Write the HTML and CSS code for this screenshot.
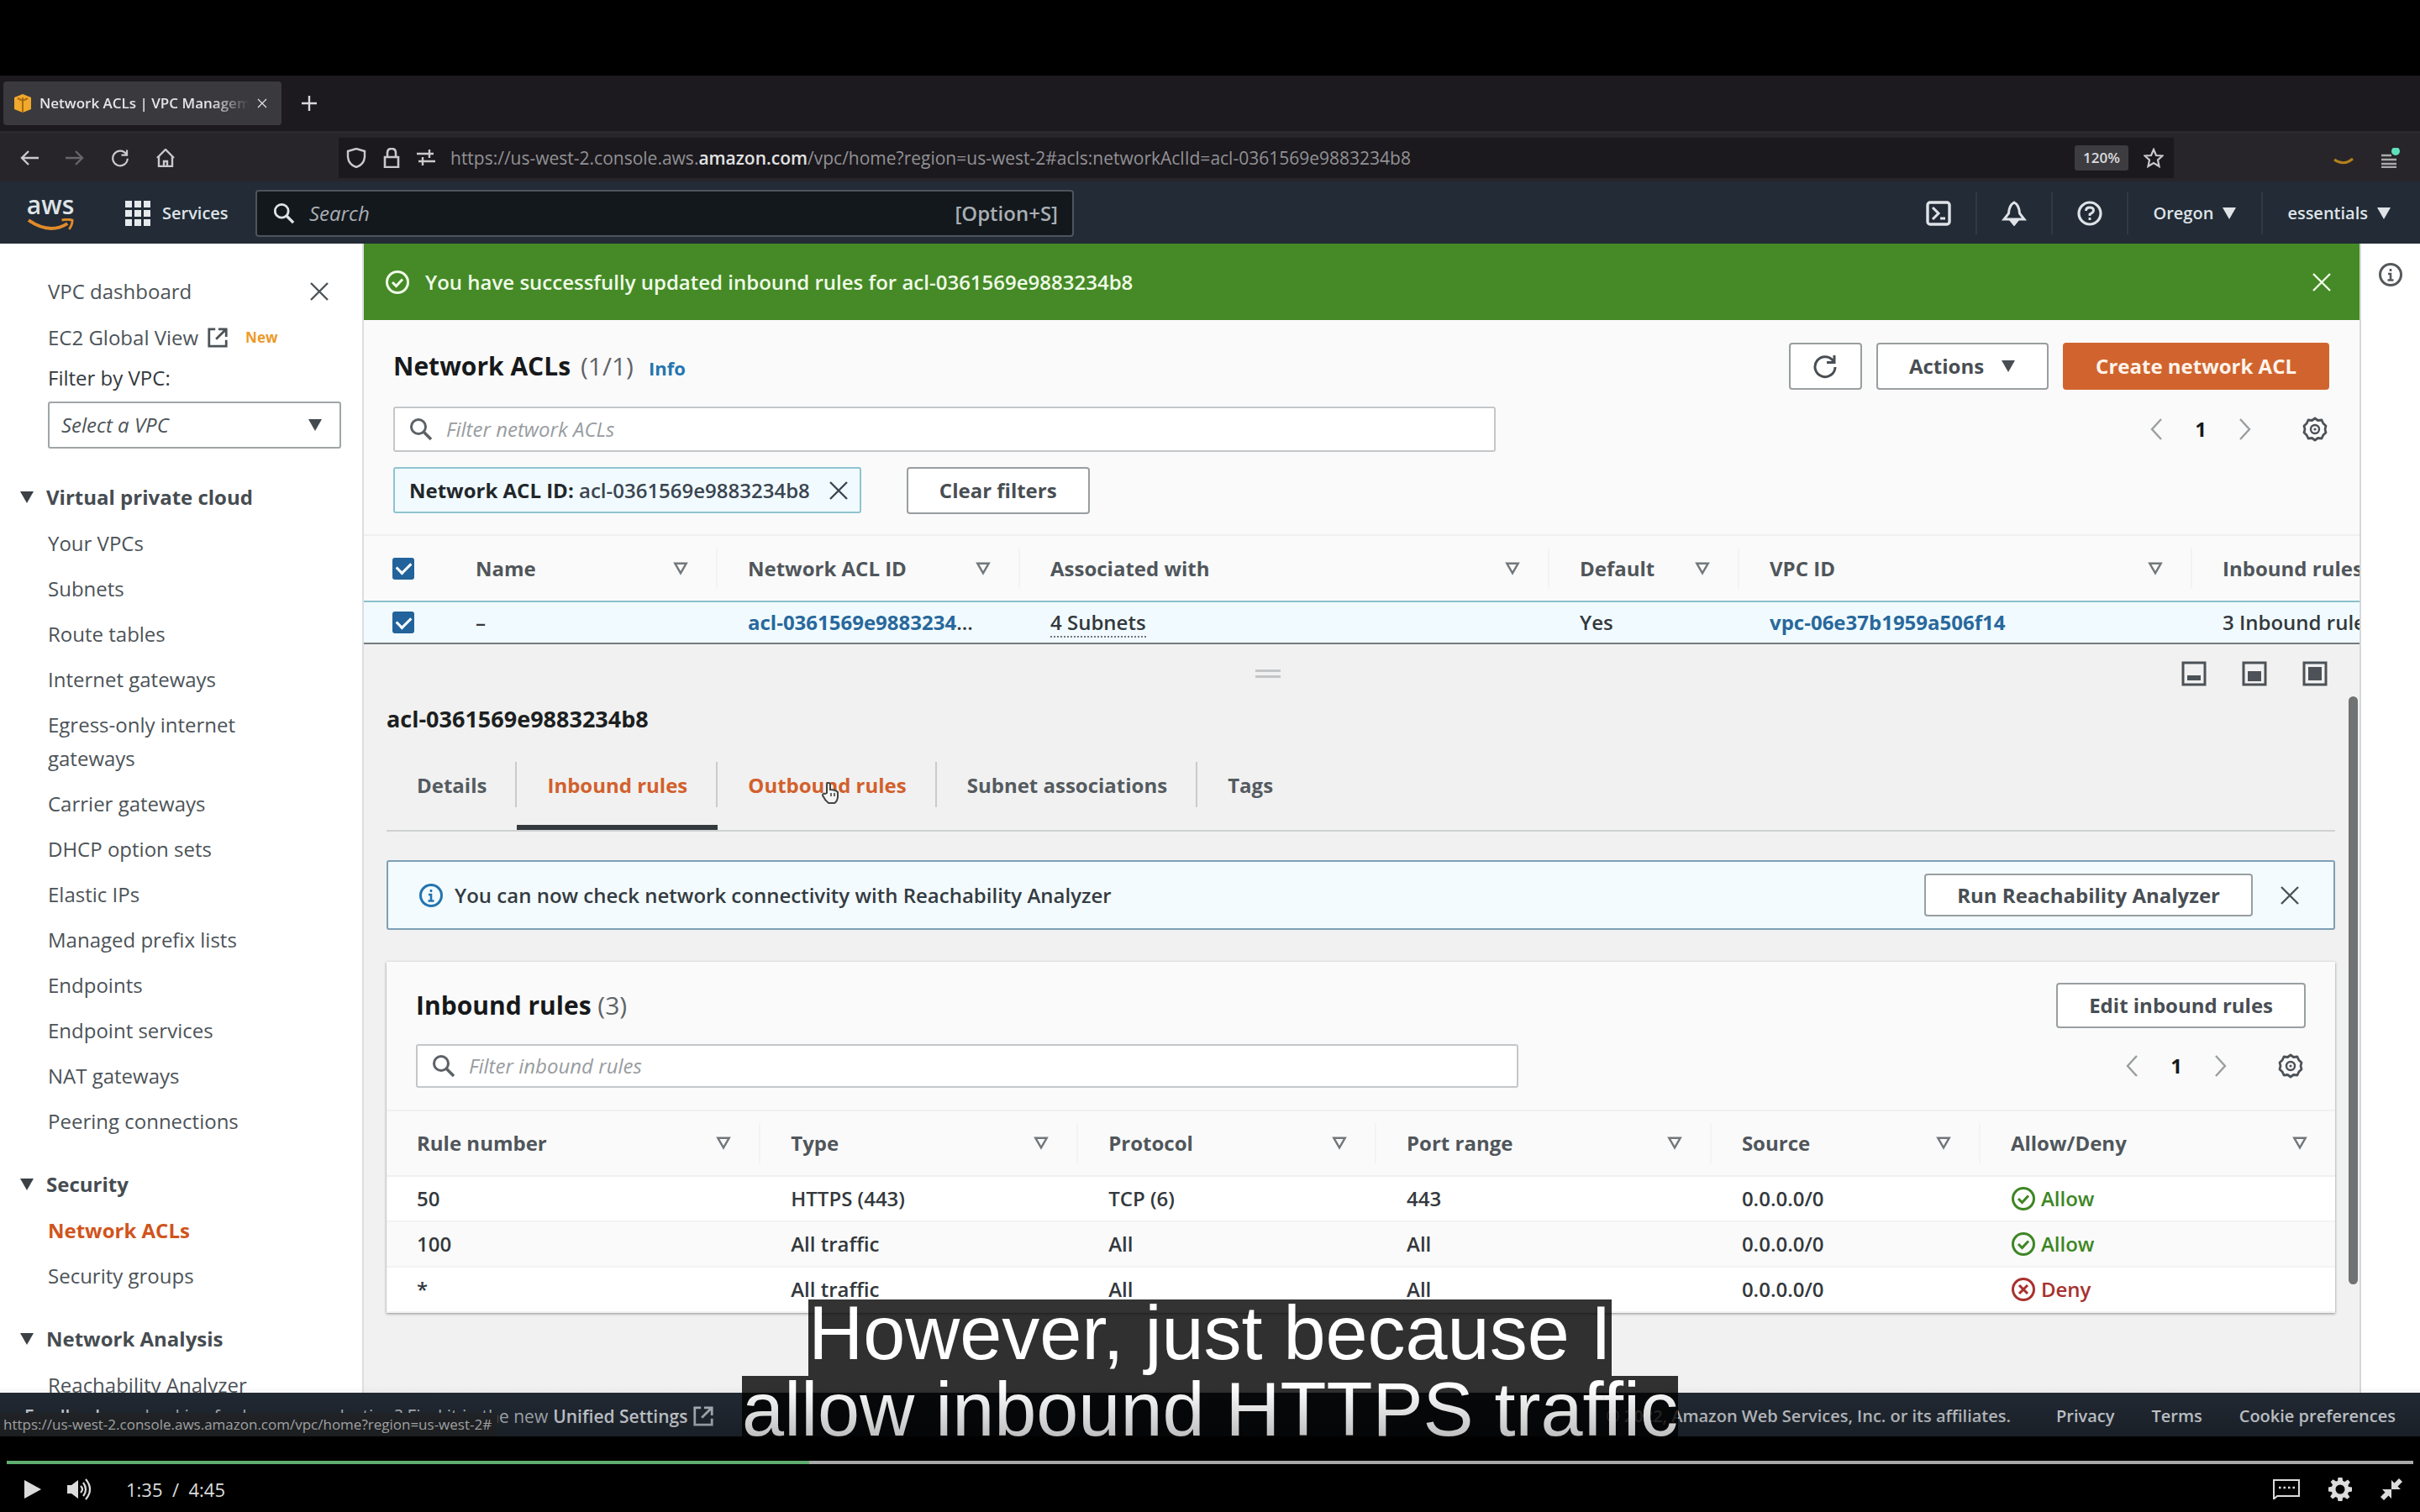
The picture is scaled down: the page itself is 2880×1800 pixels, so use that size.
FILE: index.html
```html
<!DOCTYPE html>
<html lang="en">
<head>
<meta charset="utf-8">
<title>Network ACLs | VPC Management Console</title>
<link rel="stylesheet" href="styles.css">
</head>
<body>
<svg class="defs" aria-hidden="true">
  <symbol id="close" viewBox="0 0 24 24"><path d="M2 2 22 22M22 2 2 22" fill="none" stroke="currentColor" stroke-width="2.4"/></symbol>
  <symbol id="down" viewBox="0 0 20 18"><path d="M1 1H19L10 17Z" fill="currentColor"/></symbol>
  <symbol id="sort" viewBox="0 0 20 18"><path d="M2.500 2H17.500L10 15Z" fill="none" stroke="currentColor" stroke-width="2.800"/></symbol>
  <symbol id="search" viewBox="0 0 28 28"><circle cx="11" cy="11" r="8.500" fill="none" stroke="currentColor" stroke-width="3"/><path d="M17 17 26 26" stroke="currentColor" stroke-width="3.600"/></symbol>
  <symbol id="external" viewBox="0 0 28 28"><path d="M11 3H3V25H25V17M15 3H25V13M25 3 12 16" fill="none" stroke="currentColor" stroke-width="3"/></symbol>
  <symbol id="ok" viewBox="0 0 30 30"><circle cx="15" cy="15" r="12.500" fill="none" stroke="currentColor" stroke-width="3"/><path d="M9 15 13.500 19.500 21 11.500" fill="none" stroke="currentColor" stroke-width="3"/></symbol>
  <symbol id="no" viewBox="0 0 30 30"><circle cx="15" cy="15" r="12.500" fill="none" stroke="currentColor" stroke-width="3"/><path d="M10 10 20 20M20 10 10 20" stroke="currentColor" stroke-width="3"/></symbol>
  <symbol id="info" viewBox="0 0 30 30"><circle cx="15" cy="15" r="12.500" fill="none" stroke="currentColor" stroke-width="3"/><path d="M15 8V11M12 14H15V21M11.500 21.500H18.500" fill="none" stroke="currentColor" stroke-width="2.600"/></symbol>
  <symbol id="gear" viewBox="0 0 30 30"><path d="M15 2 18.500 4.500 23 4 24.800 8 28 11 27 15 28 19 24.800 22 23 26 18.500 25.500 15 28 11.500 25.500 7 26 5.200 22 2 19 3 15 2 11 5.200 8 7 4 11.500 4.500Z" fill="none" stroke="currentColor" stroke-width="2.800" stroke-linejoin="round"/><circle cx="15" cy="15" r="5" fill="none" stroke="currentColor" stroke-width="2.400"/><circle cx="15" cy="15" r="1.600" fill="currentColor"/></symbol>
  <symbol id="prev" viewBox="0 0 16 28"><path d="M14 2 3 14 14 26" fill="none" stroke="currentColor" stroke-width="2.400"/></symbol>
  <symbol id="next" viewBox="0 0 16 28"><path d="M2 2 13 14 2 26" fill="none" stroke="currentColor" stroke-width="2.400"/></symbol>
  <symbol id="reload" viewBox="0 0 30 30"><path d="M25 9A12 12 0 1 0 27 16M26 2V10.500H17" fill="none" stroke="currentColor" stroke-width="3"/></symbol>
</svg>

<main class="video">
  <div class="tabbar">
    <div class="tab">
      <svg class="i22" viewBox="0 0 22 22"><path d="M11 0 21 4V18L11 22 1 18V4Z" fill="#f0a92c"/><path d="M11 4V22M5 5 11 8 17 5" stroke="#a86a10" stroke-width="2" fill="none"/></svg>
      <span class="tab-title">Network ACLs | VPC Management</span>
      <svg class="i12"><use href="#close"/></svg>
    </div>
    <svg class="i18" viewBox="0 0 18 18"><path d="M9 0V18M0 9H18" stroke="#d8d8da" stroke-width="2.400"/></svg>
  </div>

  <div class="toolbar">
    <div class="navs">
      <svg class="i22" viewBox="0 0 22 22"><path d="M22 11H2M10 3 2 11 10 19" fill="none" stroke="currentColor" stroke-width="2.400"/></svg>
      <svg class="i22 dim" viewBox="0 0 22 22"><path d="M0 11H20M12 3 20 11 12 19" fill="none" stroke="currentColor" stroke-width="2.400"/></svg>
      <svg class="i22"><use href="#reload"/></svg>
      <svg class="i22" viewBox="0 0 22 22"><path d="M1 11 11 1 21 11M3 9V21H19V9M9 21V15H13V21" fill="none" stroke="currentColor" stroke-width="2.400"/></svg>
    </div>
    <div class="url">
      <svg class="i24" viewBox="0 0 24 24"><path d="M12 1 22 4V11Q21 20 12 23Q3 20 2 11V4Z" fill="none" stroke="currentColor" stroke-width="2.400"/></svg>
      <svg class="i24" viewBox="0 0 24 24"><path d="M4 11H20V23H4ZM7 11V6Q7 1 12 1Q17 1 17 6V11" fill="none" stroke="currentColor" stroke-width="2.600"/></svg>
      <svg class="i22" viewBox="0 0 22 22"><path d="M0 6H20M15 1V11M2 15H22M7 10V20" stroke="currentColor" stroke-width="2.400"/></svg>
      <span class="address">https://us-west-2.console.aws.<b>amazon.com</b>/vpc/home?region=us-west-2#acls:networkAclId=acl-0361569e9883234b8</span>
      <span class="zoom">120%</span>
      <svg class="i24" viewBox="0 0 24 24"><path d="M12 2 15 9 22.500 9.500 17 14.500 18.500 22 12 18 5.500 22 7 14.500 1.500 9.500 9 9Z" fill="none" stroke="currentColor" stroke-width="2.200"/></svg>
    </div>
    <div class="ext">
      <svg class="i24" viewBox="0 0 24 24"><path d="M1 14Q12 22 23 13" fill="none" stroke="#b5801c" stroke-width="3"/></svg>
      <svg class="i24" viewBox="0 0 24 24"><path d="M2 9H14M2 14H20M2 19H20M2 23H20" stroke="#aaa" stroke-width="2.600"/><circle cx="19" cy="4" r="5" fill="#5fe0bd"/></svg>
    </div>
  </div>

  <header class="aws">
    <a class="logo" href="#" aria-label="aws home"><span>aws</span><svg viewBox="0 0 58 16"><path d="M2 2Q28 20 50 6" fill="none" stroke="#e08a2a" stroke-width="4"/><path d="M43 2Q50 0 56 2Q56 8 52 13" fill="none" stroke="#e08a2a" stroke-width="3"/></svg></a>
    <button class="services" type="button"><svg class="i30" viewBox="0 0 30 30" fill="#e6e9ec"><path d="M0 0H8V8H0ZM11 0H19V8H11ZM22 0H30V8H22ZM0 11H8V19H0ZM11 11H19V19H11ZM22 11H30V19H22ZM0 22H8V30H0ZM11 22H19V30H11ZM22 22H30V30H22Z"/></svg>Services</button>
    <label class="aws-search"><svg class="i26"><use href="#search"/></svg><input type="text" placeholder="Search" aria-label="Search"><span>[Option+S]</span></label>
    <div class="aws-right">
      <button type="button" aria-label="CloudShell"><svg class="i30" viewBox="0 0 30 30"><rect x="2" y="2" width="26" height="26" rx="3" fill="none" stroke="currentColor" stroke-width="3.400"/><path d="M8 8 15 15 8 22M17 21H23" fill="none" stroke="currentColor" stroke-width="3"/></svg></button>
      <button type="button" aria-label="Notifications"><svg class="i30" viewBox="0 0 30 30"><path d="M15 2Q9 5 8.500 15L3 22H27L21.500 15Q21 5 15 2Z" fill="none" stroke="currentColor" stroke-width="3"/><path d="M11 24H19L15 29Z" fill="currentColor" stroke="currentColor" stroke-width="2"/></svg></button>
      <button type="button" aria-label="Help"><svg class="i30" viewBox="0 0 30 30"><circle cx="15" cy="15" r="13" fill="none" stroke="currentColor" stroke-width="3.200"/><path d="M10.500 12Q10.500 8 15 8Q19.500 8 19.500 11.500Q19.500 14 15 16V18M15 20V23" fill="none" stroke="currentColor" stroke-width="2.800"/></svg></button>
      <button type="button">Oregon<svg class="tri"><use href="#down"/></svg></button>
      <button type="button">essentials<svg class="tri"><use href="#down"/></svg></button>
    </div>
  </header>

  <div class="console">
    <nav class="side">
      <div class="side-top"><a href="#">VPC dashboard</a><button type="button" aria-label="Close navigation"><svg class="i24"><use href="#close"/></svg></button></div>
      <a class="global" href="#">EC2 Global View <svg class="i26"><use href="#external"/></svg><small>New</small></a>
      <label class="by-vpc" for="vpc">Filter by VPC:</label>
      <div class="select"><select id="vpc"><option>Select a VPC</option></select><svg class="tri"><use href="#down"/></svg></div>
      <h3><svg class="tri"><use href="#down"/></svg>Virtual private cloud</h3>
      <ul>
        <li><a href="#">Your VPCs</a></li><li><a href="#">Subnets</a></li><li><a href="#">Route tables</a></li><li><a href="#">Internet gateways</a></li><li><a href="#">Egress-only internet<br>gateways</a></li><li><a href="#">Carrier gateways</a></li><li><a href="#">DHCP option sets</a></li><li><a href="#">Elastic IPs</a></li><li><a href="#">Managed prefix lists</a></li><li><a href="#">Endpoints</a></li><li><a href="#">Endpoint services</a></li><li><a href="#">NAT gateways</a></li><li><a href="#">Peering connections</a></li>
      </ul>
      <h3><svg class="tri"><use href="#down"/></svg>Security</h3>
      <ul><li><a class="current" href="#">Network ACLs</a></li><li><a href="#">Security groups</a></li></ul>
      <h3><svg class="tri"><use href="#down"/></svg>Network Analysis</h3>
      <ul><li><a href="#">Reachability Analyzer</a></li></ul>
    </nav>

    <section class="content">
      <div class="flash"><svg class="i30"><use href="#ok"/></svg><span>You have successfully updated inbound rules for acl-0361569e9883234b8</span><button type="button" aria-label="Dismiss"><svg class="i24"><use href="#close"/></svg></button></div>

      <div class="list">
        <div class="list-head">
          <h1>Network ACLs <span>(1/1)</span></h1><a class="info" href="#">Info</a>
          <div class="actions">
            <button class="btn icon" type="button" aria-label="Refresh"><svg class="i30"><use href="#reload"/></svg></button>
            <button class="btn" type="button">Actions<svg class="tri"><use href="#down"/></svg></button>
            <button class="btn primary" type="button">Create network ACL</button>
          </div>
        </div>
        <div class="filter-row">
          <label class="filter"><svg class="i28"><use href="#search"/></svg><input type="text" placeholder="Filter network ACLs" aria-label="Filter network ACLs"></label>
          <div class="pager"><button type="button" aria-label="Previous"><svg><use href="#prev"/></svg></button><b>1</b><button type="button" aria-label="Next"><svg><use href="#next"/></svg></button><button class="prefs" type="button" aria-label="Preferences"><svg class="i30"><use href="#gear"/></svg></button></div>
        </div>
        <div class="tokens">
          <div class="token"><span><b>Network ACL ID:</b> acl-0361569e9883234b8</span><button type="button" aria-label="Remove filter"><svg class="i24"><use href="#close"/></svg></button></div>
          <button class="btn" type="button">Clear filters</button>
        </div>
        <table class="acls">
          <colgroup><col class="c-check"><col class="c-name"><col class="c-id"><col class="c-assoc"><col class="c-def"><col class="c-vpc"><col class="c-in"></colgroup>
          <thead><tr><th><input type="checkbox" checked aria-label="Select all"></th><th><div>Name<svg class="sort"><use href="#sort"/></svg></div></th><th><div>Network ACL ID<svg class="sort"><use href="#sort"/></svg></div></th><th><div>Associated with<svg class="sort"><use href="#sort"/></svg></div></th><th><div>Default<svg class="sort"><use href="#sort"/></svg></div></th><th><div>VPC ID<svg class="sort"><use href="#sort"/></svg></div></th><th><div>Inbound rules</div></th></tr></thead>
          <tbody><tr><td><input type="checkbox" checked aria-label="Select acl-0361569e9883234b8"></td><td>–</td><td><a href="#">acl-0361569e9883234</a>...</td><td><span class="dotted">4 Subnets</span></td><td>Yes</td><td><a href="#">vpc-06e37b1959a506f14</a></td><td>3 Inbound rules</td></tr></tbody>
        </table>
      </div>

      <div class="split">
        <div class="split-bar">
          <div class="grip-area"><span class="grip"></span></div>
          <div class="sizes">
            <svg class="i30" viewBox="0 0 30 30"><rect x="2" y="2" width="26" height="26" fill="none" stroke="currentColor" stroke-width="3"/><path d="M7 17H23V23H7Z" fill="currentColor"/></svg>
            <svg class="i30" viewBox="0 0 30 30"><rect x="2" y="2" width="26" height="26" fill="none" stroke="currentColor" stroke-width="3"/><path d="M7 12H23V24H7Z" fill="currentColor"/></svg>
            <svg class="i30" viewBox="0 0 30 30"><rect x="2" y="2" width="26" height="26" fill="none" stroke="currentColor" stroke-width="3"/><path d="M7 7H23V23H7Z" fill="currentColor"/></svg>
          </div>
        </div>
        <div class="split-body">
          <h2>acl-0361569e9883234b8</h2>
          <div class="tabs">
            <button type="button">Details</button><button class="active" type="button">Inbound rules</button><button class="hover" type="button">Outbound rules<svg class="hand" viewBox="0 0 24 26"><path d="M8 13V3Q8 1 10 1Q12 1 12 3V9Q18 9 21 12V18Q20 24 17 25H10Q6 22 3 16Q3 13 6 14Z" fill="#f4f4f4" stroke="#444" stroke-width="2"/><path d="M13 13V17M17 13V17" stroke="#666" stroke-width="2"/></svg></button><button type="button">Subnet associations</button><button type="button">Tags</button>
          </div>
          <div class="notice"><svg class="i30"><use href="#info"/></svg><span>You can now check network connectivity with Reachability Analyzer</span><button class="btn" type="button">Run Reachability Analyzer</button><button class="x" type="button" aria-label="Dismiss"><svg class="i24"><use href="#close"/></svg></button></div>
          <div class="card">
            <div class="card-head"><h2>Inbound rules <span>(3)</span></h2><button class="btn" type="button">Edit inbound rules</button></div>
            <div class="filter-row">
              <label class="filter"><svg class="i28"><use href="#search"/></svg><input type="text" placeholder="Filter inbound rules" aria-label="Filter inbound rules"></label>
              <div class="pager"><button type="button" aria-label="Previous"><svg><use href="#prev"/></svg></button><b>1</b><button type="button" aria-label="Next"><svg><use href="#next"/></svg></button><button class="prefs" type="button" aria-label="Preferences"><svg class="i30"><use href="#gear"/></svg></button></div>
            </div>
            <table class="rules">
              <colgroup><col class="r-num"><col class="r-type"><col class="r-proto"><col class="r-port"><col class="r-src"><col class="r-act"></colgroup>
              <thead><tr><th><div>Rule number<svg class="sort"><use href="#sort"/></svg></div></th><th><div>Type<svg class="sort"><use href="#sort"/></svg></div></th><th><div>Protocol<svg class="sort"><use href="#sort"/></svg></div></th><th><div>Port range<svg class="sort"><use href="#sort"/></svg></div></th><th><div>Source<svg class="sort"><use href="#sort"/></svg></div></th><th><div>Allow/Deny<svg class="sort"><use href="#sort"/></svg></div></th></tr></thead>
              <tbody>
                <tr><td>50</td><td>HTTPS (443)</td><td>TCP (6)</td><td>443</td><td>0.0.0.0/0</td><td><span class="allow"><svg class="i30"><use href="#ok"/></svg>Allow</span></td></tr>
                <tr><td>100</td><td>All traffic</td><td>All</td><td>All</td><td>0.0.0.0/0</td><td><span class="allow"><svg class="i30"><use href="#ok"/></svg>Allow</span></td></tr>
                <tr><td>*</td><td>All traffic</td><td>All</td><td>All</td><td>0.0.0.0/0</td><td><span class="deny"><svg class="i30"><use href="#no"/></svg>Deny</span></td></tr>
              </tbody>
            </table>
          </div>
          <div class="thumb"></div>
        </div>
      </div>
    </section>

    <aside class="help"><svg class="i30"><use href="#info"/></svg></aside>
  </div>

  <footer class="foot">
    <div class="lang"><b>Feedback</b><span>Looking for language selection? Find it in the new</span><a href="#">Unified Settings</a><svg class="i26"><use href="#external"/></svg></div>
    <div class="legal"><span>© 2022, Amazon Web Services, Inc. or its affiliates.</span><a href="#">Privacy</a><a href="#">Terms</a><a href="#">Cookie preferences</a></div>
    <div class="status">https://us-west-2.console.aws.amazon.com/vpc/home?region=us-west-2#</div>
  </footer>

  <div class="captions"><p>However, just because I</p><p>allow inbound HTTPS traffic</p></div>
  <div class="shade"></div>
</main>

<div class="player">
  <progress value="95" max="285" aria-label="Playback position"></progress>
  <div class="controls">
    <button type="button" aria-label="Play"><svg class="play" viewBox="0 0 20 22"><path d="M0 0 20 11 0 22Z" fill="currentColor"/></svg></button>
    <button class="volume" type="button" aria-label="Volume"><svg class="i30" viewBox="0 0 30 26"><path d="M0 8H5L13 2V24L5 18H0Z" fill="currentColor"/><path d="M16 9Q20 13 16 17M19 5Q25 13 19 21M22 1Q32 13 22 25" fill="none" stroke="currentColor" stroke-width="2.200"/></svg></button>
    <span class="time">1:35&nbsp; /&nbsp; 4:45</span>
    <div class="end">
      <button type="button" aria-label="Captions"><svg class="i32" viewBox="0 0 32 24"><path d="M1 1H31V20H5L1 23.500Z" fill="none" stroke="currentColor" stroke-width="2"/><path d="M7 10H9.500M12.500 10H15M18 10H20.500M23.500 10H26" stroke="currentColor" stroke-width="2.600"/></svg></button>
      <button type="button" aria-label="Settings"><svg class="i28" viewBox="0 0 28 28"><path fill="currentColor" fill-rule="evenodd" d="M11.500 0H16.500L17.200 4 19.500 5 23 2.600 25.800 5.600 23.400 9 24 11 28 11.500V16.500L24 17.200 23 19.500 25.400 23 22.400 25.800 19 23.400 17 24 16.500 28H11.500L10.800 24 8.500 23 5 25.400 2.200 22.400 4.600 19 4 17 0 16.500V11.500L4 10.800 5 8.500 2.600 5 5.600 2.200 9 4.600 11 4ZM14 8.500A5.500 5.500 0 1 0 14 19.500A5.500 5.500 0 1 0 14 8.500Z"/></svg></button>
      <button type="button" aria-label="Exit full screen"><svg class="i26" viewBox="0 0 26 26"><path d="M13 13V2L16.500 5.500 22 0 26 4 20.500 9.500 24 13ZM13 13V24L9.500 20.500 4 26 0 22 5.500 16.500 2 13Z" fill="currentColor"/></svg></button>
    </div>
  </div>
</div>
</body>
</html>
```

FILE: styles.css
```css
* { box-sizing: border-box; }
body { margin: 0; height: 100vh; display: flex; flex-direction: column; padding-top: 90px; background: #000; overflow: hidden; font: 500 24px/40px "Open Sans", "Noto Sans", sans-serif; color: #33383c; }
a { color: inherit; text-decoration: none; }
button { font: inherit; color: inherit; background: none; border: 0; padding: 0; display: flex; align-items: center; }
input, select { font: inherit; color: inherit; background: none; border: 0; padding: 0; min-width: 0; outline: 0; }
h1, h2, h3, p, ul { margin: 0; padding: 0; list-style: none; }
svg { flex: none; display: block; }
.defs { position: absolute; width: 0; height: 0; }
.i12 { width: 12px; height: 12px; }
.i18 { width: 18px; height: 18px; }
.i22 { width: 22px; height: 22px; }
.i24 { width: 24px; height: 24px; }
.i26 { width: 26px; height: 26px; }
.i28 { width: 28px; height: 28px; }
.i30 { width: 30px; height: 30px; }
.i32 { width: 32px; height: 24px; }
.tri { width: 18px; height: 16px; }
.sort { width: 18px; height: 16px; color: #72777b; }

.video { position: relative; flex: 1; min-height: 0; display: flex; flex-direction: column; overflow: hidden; background: #1c1a1f; }

/* browser chrome */
.tabbar { display: flex; align-items: center; gap: 24px; height: 66px; padding: 0 4px; }
.tab { display: flex; align-items: center; width: 331px; height: 52px; padding: 0 17px 0 12px; gap: 9px; background: #3a393d; border-radius: 4px; color: #e4e4e6; font-size: 17px; font-weight: 600; }
.tab-title { flex: 1; overflow: hidden; white-space: nowrap; mask-image: linear-gradient(90deg, #000 82%, transparent); }
.toolbar { display: flex; align-items: center; height: 60px; padding: 0 24px; background: #27252a; border-top: 3px solid #2b292e; color: #c9c9cc; }
.navs { display: flex; gap: 32px; width: 379px; }
.dim { color: #66656a; }
.url { flex: 1; display: flex; align-items: center; gap: 18px; height: 48px; padding: 0 12px 0 9px; background: #1b191d; margin-right: 190px; }
.address { flex: 1; overflow: hidden; white-space: nowrap; font-size: 21px; font-weight: 400; color: #929196; }
.address b { color: #e2e2e4; font-weight: 600; }
.zoom { width: 64px; line-height: 30px; text-align: center; font-size: 17px; font-weight: 600; background: #3d3c41; color: #dcdcde; border-radius: 3px; }
.ext { display: flex; gap: 31px; }

/* console header */
.aws { display: flex; align-items: center; height: 74px; padding: 2px 34px 0 32px; background: #222b36; color: #dfe3e7; font-size: 20px; font-weight: 600; }
.logo { width: 56px; display: flex; flex-direction: column; align-items: center; font-size: 30px; line-height: 24px; font-weight: 600; }
.logo svg { width: 56px; height: 16px; margin-top: 4px; }
.services { gap: 14px; margin-left: 61px; width: 155px; }
.aws-search { width: 974px; height: 56px; display: flex; align-items: center; gap: 17px; padding: 0 17px 0 19px; background: #13181d; border: 2px solid #4d545b; border-radius: 4px; font-size: 24px; }
.aws-search input { flex: 1; font-style: italic; font-weight: 500; }
.aws-search span { color: #a9aeb3; font-weight: 600; }
.aws-search input::placeholder { color: #a9aeb3; opacity: 1; }
.aws-right { margin-left: auto; display: flex; }
.aws-right button { height: 50px; padding: 0 29px; gap: 10px; border-left: 2px solid #303a45; }
.aws-right button:first-child { border-left: 0; }
.aws-right button:last-child { padding-right: 0; }

.console { flex: 1; min-height: 0; display: flex; background: #fff; }

/* sidebar */
.side { width: 433px; flex: none; overflow: hidden; padding: 37px 25px 0 57px; border-right: 2px solid #dcdedf; color: #4c5358; }
.side-top { display: flex; justify-content: space-between; padding-right: 14px; }
.side a { display: flex; align-items: center; }
.global { gap: 10px; margin-top: 15px; }
.global small { margin-left: 10px; font-size: 17px; font-weight: 700; color: #ec9a2c; }
.by-vpc { display: block; margin-top: 8px; color: #33383c; }
.select { display: grid; align-items: center; height: 56px; margin: 8px 0 38px; border: 2px solid #a0a5a8; border-radius: 3px; }
.select select { grid-area: 1 / 1; width: 100%; appearance: none; padding-left: 14px; font-style: italic; }
.select svg { grid-area: 1 / 1; justify-self: end; margin-right: 20px; color: #444b50; pointer-events: none; }
.side h3 { display: flex; align-items: center; gap: 14px; margin: 0 0 15px -34px; font-size: 24px; font-weight: 700; color: #464c51; }
.side ul { margin-bottom: 21px; }
.side h3 svg { color: #3c4146; }
.side li { padding-bottom: 14px; }
.side .current { color: #d0541c; font-weight: 700; }

/* content */
.content { flex: 1; min-width: 0; display: flex; flex-direction: column; overflow: hidden; background: #fafafa; }
.flash { display: flex; align-items: center; gap: 18px; height: 91px; padding: 0 33px 0 25px; background: #458a26; color: #f0fbe9; }
.flash span { flex: 1; font-weight: 600; }
.list { overflow: hidden; }
.list-head { display: flex; align-items: center; height: 56px; margin: 27px 36px 0 35px; }
h1, .card h2 { font-size: 30px; font-weight: 700; color: #17191b; }
h1 span, .card h2 span { font-weight: 500; color: #5f6468; }
h1 span { margin-left: 4px; }
.info { margin: 4px 0 0 18px; font-size: 22px; font-weight: 700; color: #2575b0; }
.actions { display: flex; gap: 17px; margin-left: auto; }
.btn { justify-content: center; height: 56px; padding: 0 37px; gap: 20px; background: #fff; border: 2px solid #999ea1; border-radius: 4px; font-weight: 700; color: #484e53; white-space: nowrap; }
.btn.icon { width: 87px; padding: 0; }
.btn.primary { background: #d1642e; border-color: #d1642e; color: #fff4ec; }
.filter-row { display: flex; align-items: center; margin: 20px 38px 0 35px; }
.filter { display: flex; align-items: center; gap: 16px; width: 1312px; height: 54px; padding: 0 17px; border: 2px solid #c4c7c9; border-radius: 3px; background: #fff; color: #5c6165; }
.filter input { flex: 1; font-style: italic; }
.filter input::placeholder { color: #989c9f; opacity: 1; }
.pager { display: flex; align-items: center; margin-left: auto; gap: 38px; color: #17191b; }
.pager button { color: #9a9ea1; }
.pager button svg { width: 16px; height: 28px; }
.pager .prefs { padding-left: 22px; color: #4c5257; }
.pager .prefs svg { width: 30px; height: 30px; }
.tokens { display: flex; gap: 54px; margin: 18px 35px 24px; }
.token { display: flex; align-items: center; gap: 22px; height: 55px; padding: 0 13px 0 17px; border: 2px solid #8fc3d0; border-radius: 3px; background: #f1fbff; color: #3b4550; font-weight: 600; white-space: nowrap; }
.token b { color: #22272b; font-weight: 700; }

table { border-collapse: separate; border-spacing: 0; table-layout: fixed; width: 100%; }
th, td { padding: 0 0 0 36px; text-align: left; white-space: nowrap; overflow: hidden; }
td { font-weight: 600; }
th { height: 79px; font-weight: 700; color: #50565b; border-top: 2px solid #f0f0f1; }
th div { display: flex; align-items: center; justify-content: space-between; height: 48px; padding-right: 33px; border-right: 2px solid #f2f3f3; }
th:last-child div { border-right: 0; }
.acls { width: 2600px; }
.c-check { width: 97px; } .c-name { width: 324px; } .c-id { width: 360px; } .c-assoc { width: 630px; } .c-def { width: 226px; } .c-vpc { width: 539px; } .c-in { width: 424px; }
.acls td { height: 52px; background: #f1fbff; border-top: 2px solid #8cc0cc; border-bottom: 2px solid #747c80; }
.acls th:first-child, .acls td:first-child { padding-left: 34px; }
.acls td a { color: #28689c; font-weight: 700; }
.dotted { border-bottom: 2px dotted #70777b; }
input[type=checkbox] { display: grid; place-items: center; appearance: none; margin: 0; width: 26px; height: 26px; background: #22639b; border-radius: 3px; }
input[type=checkbox]::after { content: ""; width: 8px; height: 14px; margin-top: -4px; border: solid #fff; border-width: 0 3px 3px 0; transform: rotate(45deg); }

/* split panel */
.split { flex: 1; min-height: 0; display: flex; flex-direction: column; background: #f1f1f1; }
.split-bar { display: flex; align-items: center; gap: 50px; height: 62px; padding: 8px 38px 0; }
.grip-area { flex: 1; display: flex; justify-content: center; }
.grip { width: 30px; height: 10px; border: solid #c3c5c6; border-width: 3px 0; }
.sizes { display: flex; gap: 42px; color: #4c5257; }
.split-body { position: relative; flex: 1; padding: 7px 29px 0 27px; }
.split-body > h2 { font-size: 27px; font-weight: 700; color: #1c1f21; }
.tabs { display: flex; margin-top: 31px; border-bottom: 2px solid #cfd1d2; }
.tabs button { position: relative; height: 81px; padding: 0 36px 25px; font-weight: 700; color: #545b60; background: linear-gradient(#c9cbcc, #c9cbcc) right 0 top 0 / 2px 54px no-repeat; }
.tabs button:last-child { background: none; }
.tabs .active, .tabs .hover { color: #d2602c; }
.tabs .active { box-shadow: inset 0 -6px #343a3e; }
.hand { position: absolute; left: 122px; top: 24px; width: 24px; height: 26px; }
.notice { display: flex; align-items: center; height: 83px; margin-top: 34px; padding: 0 40px 0 36px; border: 2px solid #7f9fb5; border-radius: 3px; background: #f3fbff; }
.notice > svg { color: #2474ae; }
.notice span { flex: 1; margin-left: 13px; color: #343b41; font-weight: 600; }
.notice .btn { height: 51px; }
.notice .x { margin-left: 32px; color: #4c5257; }
.card { margin-top: 38px; background: #fafafa; box-shadow: 0 1px 3px #8a8d8f; }
.card-head { display: flex; align-items: center; justify-content: space-between; padding: 25px 35px 0; }
.card-head .btn { height: 54px; }
.card .filter { height: 52px; }
.card .filter-row { margin: 19px 38px 26px 35px; }
.rules th { height: 80px; border-bottom: 2px solid #f0f0f1; }
.rules td { height: 54px; background: #fff; border-bottom: 2px solid #f3f3f3; }
.rules tr:nth-child(2) td { background: #fafafa; }
.r-num { width: 19.2%; } .r-type { width: 16.3%; } .r-proto { width: 15.3%; } .r-port { width: 17.2%; } .r-src { width: 13.8%; } .r-act { width: 18.2%; }
.allow, .deny { display: flex; align-items: center; gap: 6px; color: #3d8624; }
.deny { color: #a8312e; }
.thumb { position: absolute; right: 2px; top: 0; width: 11px; height: 700px; border-radius: 6px; background: #707273; }
.help { width: 72px; flex: none; display: flex; justify-content: center; padding-top: 22px; border-left: 2px solid #d5d7d8; color: #55595c; }

/* footer */
.foot { position: relative; display: flex; align-items: center; justify-content: space-between; height: 52px; padding: 4px 29px 0; background: #222a34; color: #b6bcc3; font-size: 20px; }
.foot a, .foot b { font-weight: 600; color: #d9dde1; }
.lang, .legal { display: flex; align-items: center; }
.lang { gap: 6px; font-size: 21px; }
.lang b { margin-right: 41px; }
.legal { gap: 44px; font-weight: 600; color: #cdd1d6; }
.legal span { margin-right: 10px; color: #cdd1d6; }
.status { position: absolute; left: 0; bottom: 0; width: 592px; padding: 0 4px; overflow: hidden; background: #25282b; color: #c4c6c8; font-size: 17px; line-height: 28px; white-space: nowrap; }

.captions { position: absolute; left: 0; right: 0; bottom: -19px; display: flex; flex-direction: column; align-items: center; font: 90px/81px "Liberation Sans", sans-serif; color: #fff; }
.captions p { padding-bottom: 10px; background: rgba(0, 0, 0, .8); }
.shade { position: absolute; left: 0; right: 0; bottom: 0; height: 60px; background: linear-gradient(transparent, rgba(0, 0, 0, .25)); pointer-events: none; }

/* player */
.player { height: 90px; flex: none; padding: 29px 8px 0; color: #dcdcdc; }
progress { display: block; width: 100%; height: 4px; appearance: none; border: 0; }
progress::-webkit-progress-bar { background: #a9a9a9; }
progress::-webkit-progress-value { background: #5fae6f; }
.controls { display: flex; align-items: center; height: 60px; padding: 0 13px 0 21px; }
.play { width: 20px; height: 22px; }
.volume { margin-left: 31px; }
.time { margin-left: 40px; font-size: 22px; font-weight: 400; }
.end { display: flex; align-items: center; gap: 34px; margin-left: auto; }
```
